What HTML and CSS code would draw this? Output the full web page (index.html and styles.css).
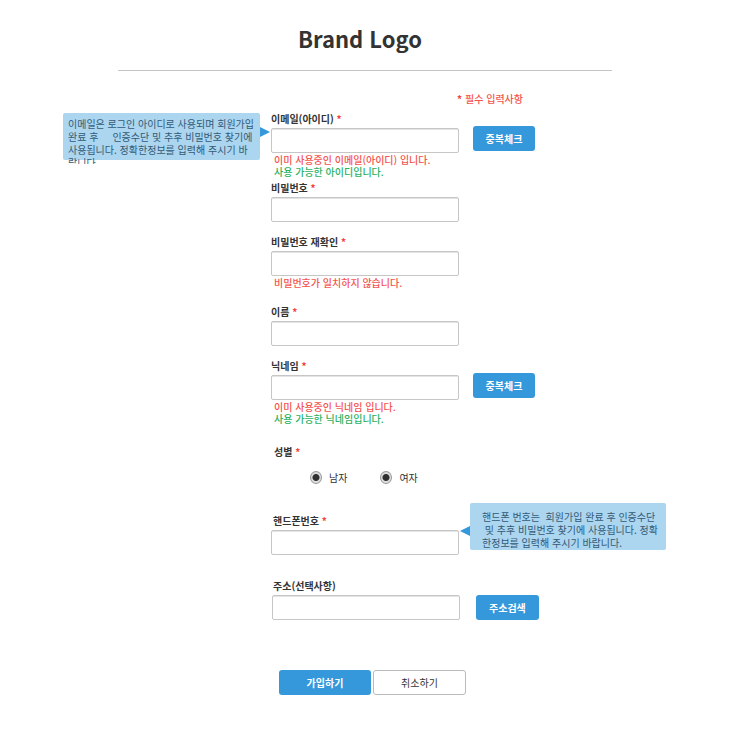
FILE: index.html
```
<!DOCTYPE html>
<html lang="ko">
<head>
<meta charset="utf-8">
<meta name="viewport" content="width=device-width, initial-scale=1">
<title>Brand Logo</title>
<link rel="stylesheet" href="styles.css">
</head>
<body>
<main class="page">
  <header class="header"><h1>Brand Logo</h1></header>
  <form class="form">
    <p class="required-note"><span class="star">*</span> 필수 입력사항</p>

    <div class="field">
      <label for="email">이메일(아이디) <span class="star">*</span></label>
      <div class="row">
        <input class="text" id="email" type="email">
        <button class="button check" type="button">중복체크</button>
      </div>
      <p class="message error">이미 사용중인 이메일(아이디) 입니다.</p>
      <p class="message success">사용 가능한 아이디입니다.</p>
      <aside class="tip tip-left"><p>이메일은 로그인 아이디로 사용되며 회원가입
완료 후 &nbsp; &nbsp; 인증수단 및 추후 비밀번호 찾기에
사용됩니다. 정확한정보를 입력해 주시기 바
랍니다.</p></aside>
    </div>

    <div class="field after-message">
      <label for="password">비밀번호 <span class="star">*</span></label>
      <input class="text" id="password" type="password">
    </div>

    <div class="field near">
      <label for="confirm">비밀번호 재확인 <span class="star">*</span></label>
      <input class="text" id="confirm" type="password">
      <p class="message error">비밀번호가 일치하지 않습니다.</p>
    </div>

    <div class="field medium">
      <label for="name">이름 <span class="star">*</span></label>
      <input class="text" id="name" type="text">
    </div>

    <div class="field near">
      <label for="nickname">닉네임 <span class="star">*</span></label>
      <div class="row">
        <input class="text" id="nickname" type="text">
        <button class="button check" type="button">중복체크</button>
      </div>
      <p class="message error">이미 사용중인 닉네임 입니다.</p>
      <p class="message success">사용 가능한 닉네임입니다.</p>
    </div>

    <fieldset class="gender">
      <legend>성별 <span class="star">*</span></legend>
      <div class="options">
        <label><input type="radio" name="male" checked>남자</label>
        <label><input type="radio" name="female" checked>여자</label>
      </div>
    </fieldset>

    <div class="field far indent">
      <label for="phone">핸드폰번호 <span class="star">*</span></label>
      <input class="text" id="phone" type="tel">
      <aside class="tip tip-right"><p>핸드폰 번호는 &nbsp;회원가입 완료 후 인증수단
&nbsp;및 추후 비밀번호 찾기에 사용됩니다. 정확
한정보를 입력해 주시기 바랍니다.</p></aside>
    </div>

    <div class="field far indent">
      <label for="address">주소(선택사항)</label>
      <div class="row wide">
        <input class="text" id="address" type="text">
        <button class="button" type="button">주소검색</button>
      </div>
    </div>

    <div class="actions">
      <button class="button" type="submit">가입하기</button>
      <button class="button cancel" type="reset">취소하기</button>
    </div>
  </form>
</main>
</body>
</html>
```
FILE: styles.css
```
* {
  box-sizing: border-box;
}

body {
  margin: 0;
  padding: 0 10px 24px 0;
  background: #fff;
  color: #333;
  font: 500 10px/12px "Noto Sans CJK KR", sans-serif;
}

h1,
p {
  margin: 0;
}

.page {
  max-width: 494px;
  margin: 0 auto;
}

.header {
  padding: 21px 0 14px;
  border-bottom: 1px solid #c4c4c4;
  text-align: center;
}

.header h1 {
  padding-right: 10px;
  font-size: 22px;
  line-height: 35px;
  font-weight: 700;
}

.form {
  padding: 22px 0 0 153px;
}

.required-note {
  padding-right: 89px;
  margin-bottom: 8px;
  color: #f5544e;
  text-align: right;
}

.star {
  color: #f4423c;
  font-weight: 700;
}

.field {
  position: relative;
}

.field > label {
  display: block;
  margin-bottom: 3px;
  font-weight: 700;
}

.indent > label {
  padding-left: 2px;
}

.after-message {
  margin-top: 4px;
}

.near {
  margin-top: 14px;
}

.medium {
  margin-top: 17px;
}

.far {
  margin-top: 25px;
}

.row {
  display: flex;
  align-items: flex-end;
  gap: 14px;
  height: 25px;
}

.row.wide {
  gap: 16px;
  padding-left: 1px;
}

.text {
  display: block;
  width: 188px;
  height: 25px;
  padding: 0 8px;
  border: 1px solid #c6c6c6;
  border-radius: 2px;
  background: #fff;
  color: #333;
  font: inherit;
  box-shadow: inset 0 1px 0 #e4e4e4;
}

.button {
  height: 25px;
  padding: 0 13px;
  border: 0;
  border-radius: 3px;
  background: #3598db;
  color: #fff;
  font: inherit;
  font-weight: 700;
  white-space: nowrap;
}

.check {
  width: 62px;
  padding: 0;
  margin-bottom: 2px;
}

.message {
  padding-left: 3px;
}

.row + .message,
.text + .message {
  margin-top: 1px;
}

.error {
  color: #f5544e;
}

.success {
  color: #2cb15f;
}

.gender {
  margin: 21px 0 0;
  padding: 0;
  border: 0;
}

.gender legend {
  padding: 0 0 0 3px;
  font-weight: 700;
}

.options {
  display: flex;
  gap: 33px;
  padding: 13px 0 6px 39px;
}

.options label {
  display: flex;
  align-items: center;
  gap: 7px;
  font-weight: 400;
}

.options input {
  width: 12px;
  height: 13px;
  margin: 0;
  appearance: none;
  border: 1px solid #999;
  border-radius: 50%;
  background: #ddd;
}

.options input:checked {
  background: radial-gradient(circle, #303030 3px, #ddd 4px);
}

.tip {
  position: absolute;
  width: 197px;
  height: 47px;
  border-radius: 2px;
  background: #acd5f0;
  color: #315a76;
  font-weight: 400;
  line-height: 13px;
  white-space: pre;
}

.tip p {
  height: 47px;
  overflow: hidden;
}

.tip::after {
  content: "";
  position: absolute;
  border: solid transparent;
  border-width: 5px 10px;
}

.tip-left {
  top: 0;
  right: calc(100% + 11px);
  padding: 4px 0 0 5px;
}

.tip-left p {
  color: #315a76;
}

.tip-left::after {
  top: 14px;
  left: 100%;
  border-left-color: #3598db;
  border-right: 0;
}

.tip-right {
  top: -12px;
  left: 199px;
  width: 196px;
  padding: 7px 0 0 12px;
}

.tip-right::after {
  top: 23px;
  right: 100%;
  border-right-color: #3598db;
  border-left: 0;
}

.actions {
  display: flex;
  gap: 2px;
  margin-top: 50px;
  padding-left: 8px;
}

.actions .button {
  width: 92px;
}

.actions .cancel {
  width: 93px;
  border: 1px solid #bbb;
  background: #fff;
  color: #333;
  font-weight: 400;
}
```
